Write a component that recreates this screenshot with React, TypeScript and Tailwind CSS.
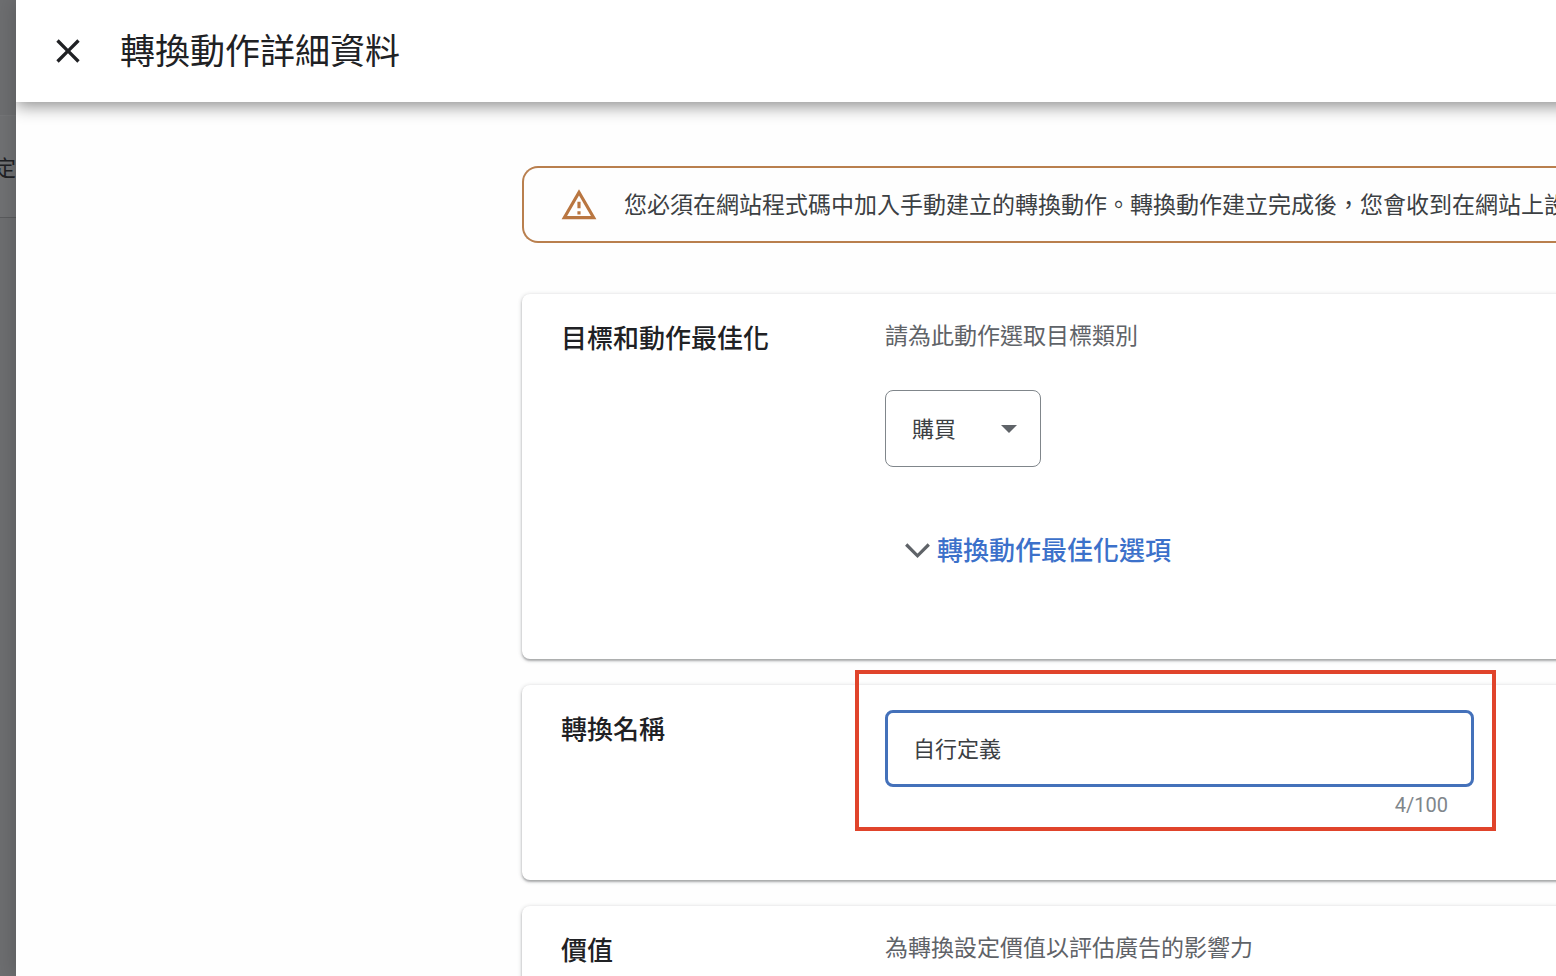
import { useState, type ReactNode } from "react";

const MAX_NAME_LENGTH = 100;

function CloseIcon() {
  return (
    <svg className="size-10" viewBox="0 0 24 24" fill="currentColor" aria-hidden="true">
      <path d="M19 6.41L17.59 5 12 10.59 6.41 5 5 6.41 10.59 12 5 17.59 6.41 19 12 13.41 17.59 19 19 17.59 13.41 12z" />
    </svg>
  );
}

function WarningIcon() {
  return (
    <svg className="size-[38px] shrink-0 text-[#b97641]" viewBox="0 0 24 24" fill="currentColor" aria-hidden="true">
      <path d="M12 5.99L19.53 19H4.47L12 5.99M12 2L1 21h22L12 2zm1 14h-2v2h2v-2zm0-6h-2v4h2v-4z" />
    </svg>
  );
}

function Card({ title, children }: { title: ReactNode; children: ReactNode }) {
  return (
    <section className="flex rounded-lg bg-white pl-[39px] shadow-[0_1px_4px_rgba(60,64,67,0.3),0_2px_2px_rgba(60,64,67,0.3)]">
      <div className="w-[324px] shrink-0 pt-[27px] text-[26px] leading-9 font-medium text-[#202124]">{title}</div>
      <div className="min-w-0 flex-1">{children}</div>
    </section>
  );
}

export default function App() {
  const [category, setCategory] = useState("購買");
  const [name, setName] = useState("自行定義");

  return (
    <div className="flex h-screen overflow-hidden bg-[#6d6e70] font-['Roboto','Noto_Sans_CJK_TC',sans-serif]">
      {/* Dimmed page behind the panel */}
      <div className="flex w-4 shrink-0 flex-col overflow-hidden pt-[115px]">
        <div className="flex h-[103px] items-center justify-end border-y border-t-[#747577] border-b-[#5a5b5d] bg-[#707173] pt-1 text-[22px] text-[#202124]">
          <span>定</span>
        </div>
      </div>

      <div className="flex min-w-0 flex-1 flex-col bg-white shadow-[0_0_20px_rgba(0,0,0,0.2)]">
        <header className="z-10 -mr-8 flex h-[102px] shrink-0 items-center bg-white pl-8 text-[#202124] shadow-[0_4px_16px_rgba(0,0,0,0.45)] [clip-path:inset(0_0_-32px_0)]">
          <button type="button" aria-label="關閉">
            <CloseIcon />
          </button>
          <h1 className="ml-8 pt-1 text-[35px] leading-[52px]">轉換動作詳細資料</h1>
        </header>

        <main className="flex-1 overflow-hidden bg-[#fefefe] pt-16 pl-[506px]">
          <div className="flex h-[77px] items-center gap-[26px] rounded-l-2xl border-2 border-r-0 border-[#b97f4e] pl-9 text-[23px] whitespace-nowrap text-[#3c4043]">
            <WarningIcon />
            <p className="pt-1">您必須在網站程式碼中加入手動建立的轉換動作。轉換動作建立完成後，您會收到在網站上設</p>
          </div>

          <div className="mt-[51px] -mr-4 flex flex-col gap-[26px]">
            <Card title={<h2>目標和動作最佳化</h2>}>
              <div className="flex flex-col items-start pt-[25px] pb-[88px]">
                <label htmlFor="category" className="text-[23px] leading-9 text-[#5f6368]">
                  請為此動作選取目標類別
                </label>
                <div className="relative mt-[35px]">
                  <select
                    id="category"
                    value={category}
                    onChange={e => setCategory(e.target.value)}
                    className="h-[77px] w-[156px] appearance-none rounded-lg border border-[#80868b] bg-white pt-0.5 pl-[26px] text-[22px] text-[#3c4043]"
                  >
                    <option>購買</option>
                  </select>
                  <svg className="pointer-events-none absolute top-[35px] right-6 h-2 w-4 text-[#5f6368]" viewBox="0 0 16 8" fill="currentColor" aria-hidden="true">
                    <path d="M0 0h16l-8 8z" />
                  </svg>
                </div>
                <button type="button" className="mt-16 ml-5 flex items-center gap-1.5 text-[26px] leading-10 font-medium text-[#3c71ca]">
                  <svg className="h-4 w-[26px] text-[#5f6368]" viewBox="0 0 26 16" fill="none" stroke="currentColor" strokeWidth="3.2" aria-hidden="true">
                    <path d="M1.2 1.5L12.5 12.8 23.8 1.5" />
                  </svg>
                  轉換動作最佳化選項
                </button>
              </div>
            </Card>

            <Card title={<label htmlFor="name">轉換名稱</label>}>
              <div className="relative w-[589px] pt-[25px] pb-[57px]">
                <input
                  id="name"
                  type="text"
                  value={name}
                  maxLength={MAX_NAME_LENGTH}
                  onChange={e => setName(e.target.value)}
                  className="block h-[77px] w-full rounded-lg border-3 border-[#4471ba] bg-white px-[25px] pb-1 text-[22px] text-[#3c4043] outline-none"
                />
                <p className="pr-[26px] text-right text-xl leading-9 text-[#80868b]">
                  {name.length}/{MAX_NAME_LENGTH}
                </p>
                {/* Highlight around the field to fill in */}
                <div className="pointer-events-none absolute -top-[15px] -right-[22px] -left-[30px] h-[161px] border-4 border-[#e0442b]" />
              </div>
            </Card>

            <Card title={<h2>價值</h2>}>
              <p className="pt-[25px] pb-16 text-[23px] leading-9 text-[#5f6368]">為轉換設定價值以評估廣告的影響力</p>
            </Card>
          </div>
        </main>
      </div>
    </div>
  );
}
